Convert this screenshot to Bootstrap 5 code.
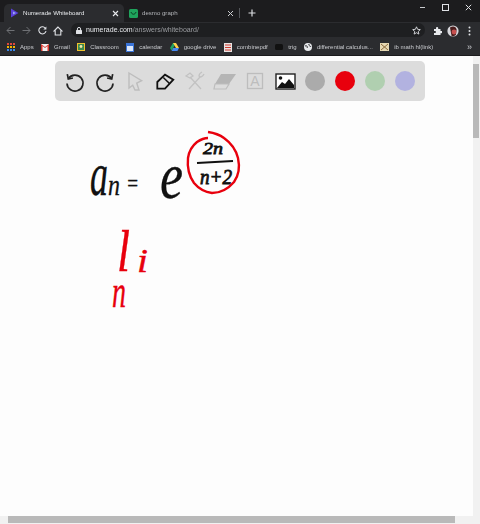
<!DOCTYPE html>
<html lang="en">
<head>
  <meta charset="UTF-8" />
  <meta name="viewport" content="width=device-width, initial-scale=1" />
  <title>Numerade Whiteboard</title>
  <link href="https://cdn.jsdelivr.net/npm/bootstrap@5.3.0/dist/css/bootstrap.min.css" rel="stylesheet" />
  <style>
    html, body { height: 100%; overflow: hidden; }
    body { background: #fdfdfd; font-family: "Liberation Sans", Arial, sans-serif; }
    .shell { height: 524px; width: 480px; }
    .chrome-ui { filter: blur(.3px); }

    .tab-row { height: 22px; background: #1c1c1e; padding-left: 4px; }
    .tab-item { height: 18px; width: 120px; margin-top: 4px; padding: 0 5px 0 6px; border-radius: 5px 5px 0 0; color: #e8eaed; font-size: 6.1px; }
    .tab-on { background: #2b2c2f; }
    .tab-off { color: #b4b6ba; padding-left: 5px; width: 115px; }
    .tab-sep { width: 1px; height: 10px; margin-top: 8px; background: #55575b; }
    .tab-plus { width: 21px; margin-top: 4px; margin-left: 1px; }
    .win-btn { width: 23px; height: 15px; }

    .addr-row { height: 16px; background: #2b2c2f; padding: 1px 3px 0 2px; }
    .nav-slot { width: 16px; height: 15px; }
    .url-pill { width: 354px; height: 14px; margin-left: 5px; border-radius: 7px; background: #1e1f21; font-size: 7px; padding: 0 4px 0 5px; color: #9a9ca0; }
    .url-host { color: #e8eaed; }

    .mark-row { height: 18px; background: #2b2c2f; padding: 1px 0 0 7px; gap: 7.4px; color: #c9cbcf; font-size: 6px; border-bottom: 1px solid #1b1b1d; }
    .mark-item { gap: 5px; white-space: nowrap; }
    .mark-more { right: 8px; top: 3px; color: #c9cbcf; font-size: 9px; }

    .board { background: #fdfdfd; }
    .tool-bar { width: 370px; height: 40px; margin: 5px 0 0 55px; padding: 0 5px; background: #dcdcdc; border-radius: 5px; position: relative; z-index: 1; }
    .tool-slot { width: 30px; height: 40px; }
    .swatch { width: 20px; height: 20px; border-radius: 50%; }
    .sw-grey { background: #ababab; }
    .sw-red { background: #e8000d; }
    .sw-green { background: #b0cfb0; }
    .sw-blue { background: #b2b2e0; }
    .ink-layer { left: 0; top: 0; }
    .ink-layer text { font-family: "Liberation Serif", serif; font-style: italic; }

    .v-bar { width: 7px; background: #f1f1f1; padding-top: 8px; }
    .v-thumb { height: 74px; background: #b9b9b9; width: 6px; }
    .h-bar { height: 8px; background: #f1f1f1; padding-left: 8px; }
    .h-thumb { width: 447px; height: 7px; background: #b9b9b9; }
  </style>
</head>
<body>
<div class="shell d-flex flex-column">
  <div class="chrome-ui">
    <div class="tab-row d-flex">
      <div class="tab-item tab-on d-flex align-items-center">
        <svg width="9" height="10" viewBox="0 0 9 10" class="flex-shrink-0"><path d="M1 .5 8.500 5 1 9.500z" fill="#5a3fd8"/><path d="M3 3.400 6 5 3 6.600z" fill="#9aa8f0"/></svg>
        <span class="ms-1 flex-grow-1">Numerade Whiteboard</span>
        <svg width="7" height="7" viewBox="0 0 7 7"><path d="M1 1 6 6M6 1 1 6" stroke="#e8eaed" stroke-width="1.100"/></svg>
      </div>
      <div class="tab-item tab-off d-flex align-items-center">
        <svg width="9" height="9" viewBox="0 0 9 9" class="flex-shrink-0"><rect width="9" height="9" rx="1.500" fill="#1fa35c"/><path d="M2 3c1 3 4 3 5 0" stroke="#0b3d22" fill="none"/></svg>
        <span class="ms-1 flex-grow-1">desmo graph</span>
        <svg width="7" height="7" viewBox="0 0 7 7"><path d="M1 1 6 6M6 1 1 6" stroke="#c9cbcf"/></svg>
      </div>
      <div class="tab-sep"></div>
      <div class="tab-plus d-flex align-items-center justify-content-center">
        <svg width="8" height="8" viewBox="0 0 8 8"><path d="M4 .5v7M.5 4h7" stroke="#dadce0" stroke-width="1.200"/></svg>
      </div>
      <div class="d-flex ms-auto">
        <div class="win-btn d-flex align-items-center justify-content-center"><svg width="7" height="7" viewBox="0 0 7 7"><path d="M1 3.500h5" stroke="#c9cbcf"/></svg></div>
        <div class="win-btn d-flex align-items-center justify-content-center"><svg width="7" height="7" viewBox="0 0 7 7"><rect x=".5" y=".5" width="6" height="6" fill="none" stroke="#dfe1e5"/></svg></div>
        <div class="win-btn d-flex align-items-center justify-content-center"><svg width="7" height="7" viewBox="0 0 7 7"><path d="M.8.8l5.400 5.400M6.200.8.8 6.200" stroke="#dfe1e5"/></svg></div>
      </div>
    </div>

    <div class="addr-row d-flex">
      <div class="nav-slot d-flex align-items-center justify-content-center"><svg width="9" height="9" viewBox="0 0 9 9"><path d="M8.500 4.500H1M4.500 1 1 4.500 4.500 8" fill="none" stroke="#6f7175"/></svg></div>
      <div class="nav-slot d-flex align-items-center justify-content-center"><svg width="9" height="9" viewBox="0 0 9 9"><path d="M.5 4.500H8M4.500 1 8 4.500 4.500 8" fill="none" stroke="#6f7175"/></svg></div>
      <div class="nav-slot d-flex align-items-center justify-content-center"><svg width="9" height="9" viewBox="0 0 9 9"><path d="M7.600 2.600A3.600 3.600 0 1 0 8 5" fill="none" stroke="#dfe1e5" stroke-width="1.100"/><path d="M8.400.6v3h-3z" fill="#dfe1e5"/></svg></div>
      <div class="nav-slot d-flex align-items-center justify-content-center"><svg width="10" height="10" viewBox="0 0 10 10"><path d="M5 1 1 5h1.200v4h5.600V5H9z" fill="none" stroke="#dfe1e5" stroke-width="1.100"/></svg></div>
      <div class="url-pill d-flex align-items-center">
        <svg width="6" height="7" viewBox="0 0 6 7" class="flex-shrink-0 me-1"><rect y="3" width="6" height="4" rx=".6" fill="#dfe1e5"/><path d="M1.400 3V2a1.600 1.600 0 0 1 3.200 0v1" fill="none" stroke="#dfe1e5"/></svg>
        <span class="flex-grow-1"><span class="url-host">numerade.com</span>/answers/whiteboard/</span>
        <svg width="9" height="9" viewBox="0 0 9 9"><path d="m4.500.8 1.100 2.500 2.700.3-2 1.800.6 2.700-2.400-1.400-2.400 1.400.6-2.700-2-1.800 2.700-.3z" fill="none" stroke="#dfe1e5" stroke-width=".9"/></svg>
      </div>
      <div class="d-flex align-items-center ms-auto">
        <div class="nav-slot d-flex align-items-center justify-content-center"><svg width="9" height="9" viewBox="0 0 9 9"><path d="M1 3h2V2a1 1 0 0 1 2.200 0v1h2.300v2h1a1 1 0 0 1 0 2.200h-1V9H1V7h1a1 1 0 0 0 0-2H1z" fill="#e8eaed"/></svg></div>
        <div class="nav-slot d-flex align-items-center justify-content-center"><svg width="12" height="12" viewBox="0 0 12 12"><circle cx="6" cy="6" r="5.600" fill="#d8d8dc"/><path d="M3 2.500c3-2 6-1 6.600 2L9 9.500c-1 1.600-3 2-4.400 1.400z" fill="#4a1d1d"/><circle cx="7" cy="7" r="2.400" fill="#c8504f"/></svg></div>
        <div class="nav-slot d-flex align-items-center justify-content-center"><svg width="3" height="10" viewBox="0 0 3 10"><circle cx="1.500" cy="1.500" r="1" fill="#dfe1e5"/><circle cx="1.500" cy="5" r="1" fill="#dfe1e5"/><circle cx="1.500" cy="8.500" r="1" fill="#dfe1e5"/></svg></div>
      </div>
    </div>

    <div class="mark-row d-flex align-items-center position-relative">
      <div class="mark-item d-flex align-items-center"><svg width="8" height="8" viewBox="0 0 8 8"><path d="M0 1h2M3 1h2M6 1h2" stroke="#e0483c" stroke-width="2"/><path d="M0 4h2M3 4h2M6 4h2" stroke="#f4b400" stroke-width="2"/><path d="M0 7h2M3 7h2M6 7h2" stroke="#3b88e8" stroke-width="2"/></svg>Apps</div>
      <div class="mark-item d-flex align-items-center"><svg width="8" height="7" viewBox="0 0 8 7"><rect width="8" height="7" fill="#f2f2f2"/><path d="M0 0v7h1.500V2L4 4l2.500-2v5H8V0L4 3z" fill="#d9352b"/></svg>Gmail</div>
      <div class="mark-item d-flex align-items-center"><svg width="8" height="8" viewBox="0 0 8 8"><rect width="8" height="8" fill="#f0c22e"/><rect x="1" y="1" width="6" height="6" fill="#3c8a4c"/><circle cx="4" cy="3.500" r="1.400" fill="#f4e6a8"/></svg>Classroom</div>
      <div class="mark-item d-flex align-items-center"><svg width="8" height="9" viewBox="0 0 8 9"><rect width="8" height="9" fill="#3a74d8"/><rect x="1" y="3" width="6" height="5" fill="#dbe7fa"/></svg>calendar</div>
      <div class="mark-item d-flex align-items-center"><svg width="9" height="8" viewBox="0 0 9 8"><path d="M3 0h3L3.200 5 1.600 7.600 0 5z" fill="#1fa463"/><path d="M3 0h3l3 5H6z" fill="#ffd04b"/><path d="M3.200 5H9L7.400 8H1.600z" fill="#4688f1"/></svg>google drive</div>
      <div class="mark-item d-flex align-items-center"><svg width="8" height="9" viewBox="0 0 8 9"><rect width="8" height="9" fill="#e9e4e2"/><path d="M1 2h6M1 4.500h6M1 7h6" stroke="#d0392f"/></svg>combinepdf</div>
      <div class="mark-item d-flex align-items-center"><svg width="8" height="6" viewBox="0 0 8 6"><rect width="8" height="6" rx="1.500" fill="#111"/></svg>trig</div>
      <div class="mark-item d-flex align-items-center"><svg width="8" height="8" viewBox="0 0 8 8"><circle cx="4" cy="4" r="4" fill="#e8eaed"/><path d="M1 3c2-1 3 1 2 2M5 1c-1 2 2 2 2 3" stroke="#2b2c2f" fill="none"/></svg>differential calculus...</div>
      <div class="mark-item d-flex align-items-center"><svg width="9" height="8" viewBox="0 0 9 8"><rect width="9" height="8" fill="#e6d9b4"/><path d="M1 1l7 6M8 1 1 7" stroke="#8c6a3c"/></svg>ib math hl(link)</div>
      <span class="mark-more position-absolute">»</span>
    </div>
  </div>

  <div class="d-flex flex-grow-1 overflow-hidden">
    <div class="board flex-grow-1 position-relative">
      <div class="tool-bar d-flex align-items-center">
        <div class="tool-slot d-flex align-items-center justify-content-center"><svg width="24" height="24" viewBox="0 0 24 24"><path d="M5.300 9.700A8 8 0 1 1 4 14.500" fill="none" stroke="#222" stroke-width="1.700"/><path d="M4.300 5.200 5.300 10 9.900 9" fill="none" stroke="#222" stroke-width="1.700"/></svg></div>
        <div class="tool-slot d-flex align-items-center justify-content-center"><svg width="24" height="24" viewBox="0 0 24 24"><path d="M18.700 9.700A8 8 0 1 0 20 14.500" fill="none" stroke="#222" stroke-width="1.700"/><path d="M19.700 5.200 18.700 10 14.100 9" fill="none" stroke="#222" stroke-width="1.700"/></svg></div>
        <div class="tool-slot d-flex align-items-center justify-content-center"><svg width="24" height="24" viewBox="0 0 24 24"><path d="M6 4 18.600 11.600 13.700 14 16 21 12 21 9.700 16.300 6 19z" fill="none" stroke="#bdbdbd" stroke-width="1.400"/></svg></div>
        <div class="tool-slot d-flex align-items-center justify-content-center"><svg width="24" height="24" viewBox="0 0 24 24"><path d="M4.300 13 12 5.700 20.300 10.700 12 19.700H4.300z" fill="none" stroke="#111" stroke-width="1.800"/><path d="M10.300 8.500 16.500 14.500" stroke="#111" stroke-width="1.500"/></svg></div>
        <div class="tool-slot d-flex align-items-center justify-content-center"><svg width="24" height="24" viewBox="0 0 24 24" fill="none" stroke="#c2c2c2" stroke-width="1.300"><path d="M7 8 18 20M17 8 6 20"/><path d="M3 7l4-3 3 3-3 2z"/><path d="M21 5c-1 2-2 3-4 3l-1-1c0-2 1-3 3-4"/></svg></div>
        <div class="tool-slot d-flex align-items-center justify-content-center"><svg width="24" height="24" viewBox="0 0 24 24"><path d="M8 5H23L16 15H2z" fill="#b5b5b5"/><path d="M2 15h14l-3 5H1z" fill="none" stroke="#bdbdbd" stroke-width="1.200"/></svg></div>
        <div class="tool-slot d-flex align-items-center justify-content-center"><svg width="24" height="24" viewBox="0 0 24 24"><rect x="4.500" y="4.500" width="15" height="15" fill="none" stroke="#bdbdbd" stroke-width="1.300"/><text x="12" y="17" text-anchor="middle" font-family="Liberation Sans, sans-serif" font-size="14" fill="#bdbdbd">A</text></svg></div>
        <div class="tool-slot d-flex align-items-center justify-content-center"><svg width="24" height="24" viewBox="0 0 24 24"><rect x="3" y="5" width="19" height="15" fill="#fff" stroke="#222" stroke-width="1.400"/><circle cx="7.500" cy="9" r="1.800" fill="#111"/><path d="M4 19l5-6 3 2 4-5 5 6v3z" fill="#111"/></svg></div>
        <div class="tool-slot d-flex align-items-center justify-content-center"><div class="swatch sw-grey"></div></div>
        <div class="tool-slot d-flex align-items-center justify-content-center"><div class="swatch sw-red"></div></div>
        <div class="tool-slot d-flex align-items-center justify-content-center"><div class="swatch sw-green"></div></div>
        <div class="tool-slot d-flex align-items-center justify-content-center"><div class="swatch sw-blue"></div></div>
      </div>

      <!-- whiteboard ink: the handwriting stays real text, only the ring and rule are strokes -->
      <svg class="ink-layer position-absolute" width="473" height="460" viewBox="0 56 473 460">
        <g fill="#111" stroke="#111" stroke-width=".3">
          <text x="90" y="195" font-size="62" textLength="18" lengthAdjust="spacingAndGlyphs">a</text>
          <text x="108" y="195" font-size="30" textLength="12" lengthAdjust="spacingAndGlyphs">n</text>
          <text x="126" y="191" font-size="24" textLength="13" lengthAdjust="spacingAndGlyphs">=</text>
          <text x="160" y="198" font-size="66" textLength="23" lengthAdjust="spacingAndGlyphs">e</text>
        </g>
        <g fill="#111" stroke="#111" stroke-width=".8">
          <text x="203" y="154" font-size="17" textLength="20" lengthAdjust="spacingAndGlyphs">2n</text>
          <text x="200" y="184" font-size="20" textLength="32" lengthAdjust="spacingAndGlyphs">n+2</text>
        </g>
        <path d="M197 163 233 161" stroke="#111" stroke-width="1.800" fill="none"/>
        <path d="M208 132C215 133 220 135 224 138 231 143 236 150 238 158 240 167 239 175 234 182 228 189 220 193 212 193 205 192 199 189 194 183 189 176 187 168 188 158 189 151 192 146 197 142 200 140 204 138 208 138" stroke="#e8000d" stroke-width="2.400" fill="none"/>
        <g fill="#e8000d" stroke="#e8000d" stroke-width=".4">
          <text x="117" y="271" font-size="60" textLength="13" lengthAdjust="spacingAndGlyphs">l</text>
          <text x="137" y="272" font-size="34" textLength="11" lengthAdjust="spacingAndGlyphs">i</text>
          <text x="112" y="307" font-size="46" textLength="14" lengthAdjust="spacingAndGlyphs">n</text>
        </g>
      </svg>
    </div>
    <div class="v-bar flex-shrink-0"><div class="v-thumb"></div></div>
  </div>
  <div class="h-bar"><div class="h-thumb"></div></div>
</div>
<script src="https://cdn.jsdelivr.net/npm/bootstrap@5.3.0/dist/js/bootstrap.bundle.min.js"></script>
</body>
</html>
